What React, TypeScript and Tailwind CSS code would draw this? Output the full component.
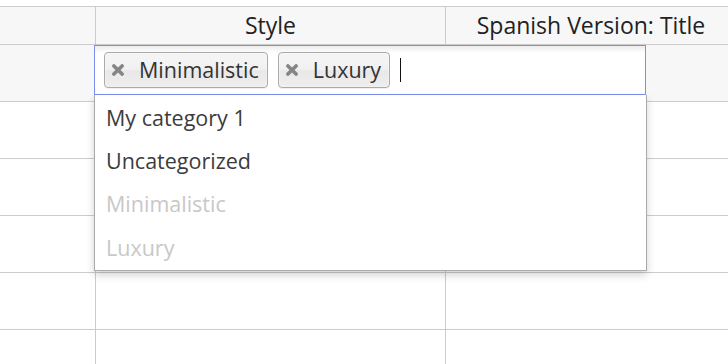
import React from "react";

const font = { fontFamily: '"Open Sans", "Noto Sans", sans-serif' };

function XIcon() {
  return (
    <svg width="12" height="12" viewBox="0 0 12 12" className="shrink-0">
      <path d="M1.9 1.9 L10.1 10.1 M10.1 1.9 L1.9 10.1" stroke="#858585" strokeWidth="3.6" strokeLinecap="round" />
    </svg>
  );
}

function Chip({ label }: { label: string }) {
  return (
    <div className="flex h-[36px] items-center gap-[15px] rounded-[4px] border border-[#aaaaaa] bg-[linear-gradient(#f4f4f4_20%,#f0f0f0_50%,#e8e8e8_52%,#eeeeee_100%)] pl-[7px] pr-[8px] text-[21.5px] text-[#333333] shadow-[inset_0_0_2px_#fff,0_1px_0_rgba(0,0,0,0.05)]">
      <XIcon />
      <span className="leading-none">{label}</span>
    </div>
  );
}

function Row({ h, gray }: { h: string; gray?: boolean }) {
  return (
    <div className={`flex border-b border-[#cccccc] ${h} ${gray ? "bg-[#f7f7f7]" : "bg-white"}`}>
      <div className="w-[96px] shrink-0 border-r border-[#cccccc]" />
      <div className="w-[350px] shrink-0 border-r border-[#cccccc]" />
      <div className="flex-1" />
    </div>
  );
}

export default function App() {
  return (
    <div className="relative h-[364px] w-[728px] overflow-hidden bg-white pt-[6px]" style={font}>
      <div className="border-t border-[#cccccc]">
        <div className="flex h-[38px] border-b border-[#cccccc] bg-[#f7f7f7] text-[23px] text-[#222222]">
          <div className="w-[96px] shrink-0 border-r border-[#cccccc]" />
          <div className="flex w-[350px] shrink-0 items-center justify-center border-r border-[#cccccc]">
            Style
          </div>
          <div className="flex w-[290px] shrink-0 items-center justify-center whitespace-nowrap">
            Spanish Version: Title
          </div>
        </div>
        <Row h="h-[57px]" gray />
        <Row h="h-[57px]" />
        <Row h="h-[57px]" />
        <Row h="h-[57px]" />
        <Row h="h-[57px]" />
        <Row h="h-[57px]" />
      </div>

      <div className="absolute left-[94px] top-[45px] w-[553px]">
        <div className="flex h-[50px] w-[552px] items-center gap-[10px] border border-[#7b8ff2] bg-[linear-gradient(#eeeeee_1%,#ffffff_15%)] pl-[9px]">
          <Chip label="Minimalistic" />
          <Chip label="Luxury" />
          <div className="h-[24px] w-[1px] bg-[#111111]" />
        </div>
        <div className="border border-t-0 border-[#aaaaaa] bg-white pt-[2px] text-[21.5px] shadow-[0_4px_8px_rgba(0,0,0,0.18)]">
          <div className="flex h-[43px] items-center pl-[11px] text-[#3c3c3c]">My category 1</div>
          <div className="flex h-[43px] items-center pl-[11px] text-[#3c3c3c]">Uncategorized</div>
          <div className="flex h-[43px] items-center pl-[11px] text-[#c8c8c8]">Minimalistic</div>
          <div className="flex h-[44px] items-center pl-[11px] text-[#c8c8c8]">Luxury</div>
        </div>
      </div>
    </div>
  );
}
